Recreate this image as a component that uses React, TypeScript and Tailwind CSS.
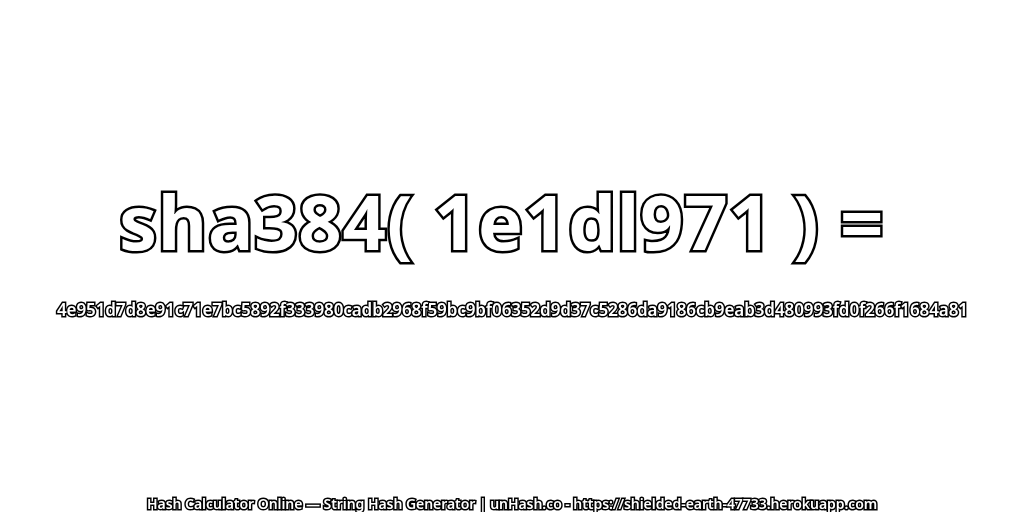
export default function App() {
  const font = { fontFamily: '"Noto Sans", sans-serif' };
  return (
    <div className="w-[1024px] h-[512px] bg-white flex flex-col items-center overflow-hidden text-white" style={font}>
      <div className="mt-[176px] text-[76px] leading-[90px] font-bold tracking-[0.7px] whitespace-pre [-webkit-text-stroke:5px_black] [paint-order:stroke_fill] [will-change:transform]">{"sha384( 1e1dl971 ) =\u00a0"}</div>
      <div className="mt-[33px] text-[17px] leading-[22px] font-semibold tracking-[-0.1px] whitespace-nowrap [-webkit-text-stroke:3px_black] [paint-order:stroke_fill] [will-change:transform]">4e951d7d8e91c71e7bc5892f333980cadb2968f59bc9bf06352d9d37c5286da9186cb9eab3d480993fd0f266f1684a81</div>
      <div className="mt-[174px] text-[14px] leading-[18px] font-semibold tracking-[-0.05px] whitespace-nowrap [-webkit-text-stroke:3px_black] [paint-order:stroke_fill] [will-change:transform]">Hash Calculator Online — String Hash Generator | unHash.co - https://shielded-earth-47733.herokuapp.com</div>
    </div>
  );
}
